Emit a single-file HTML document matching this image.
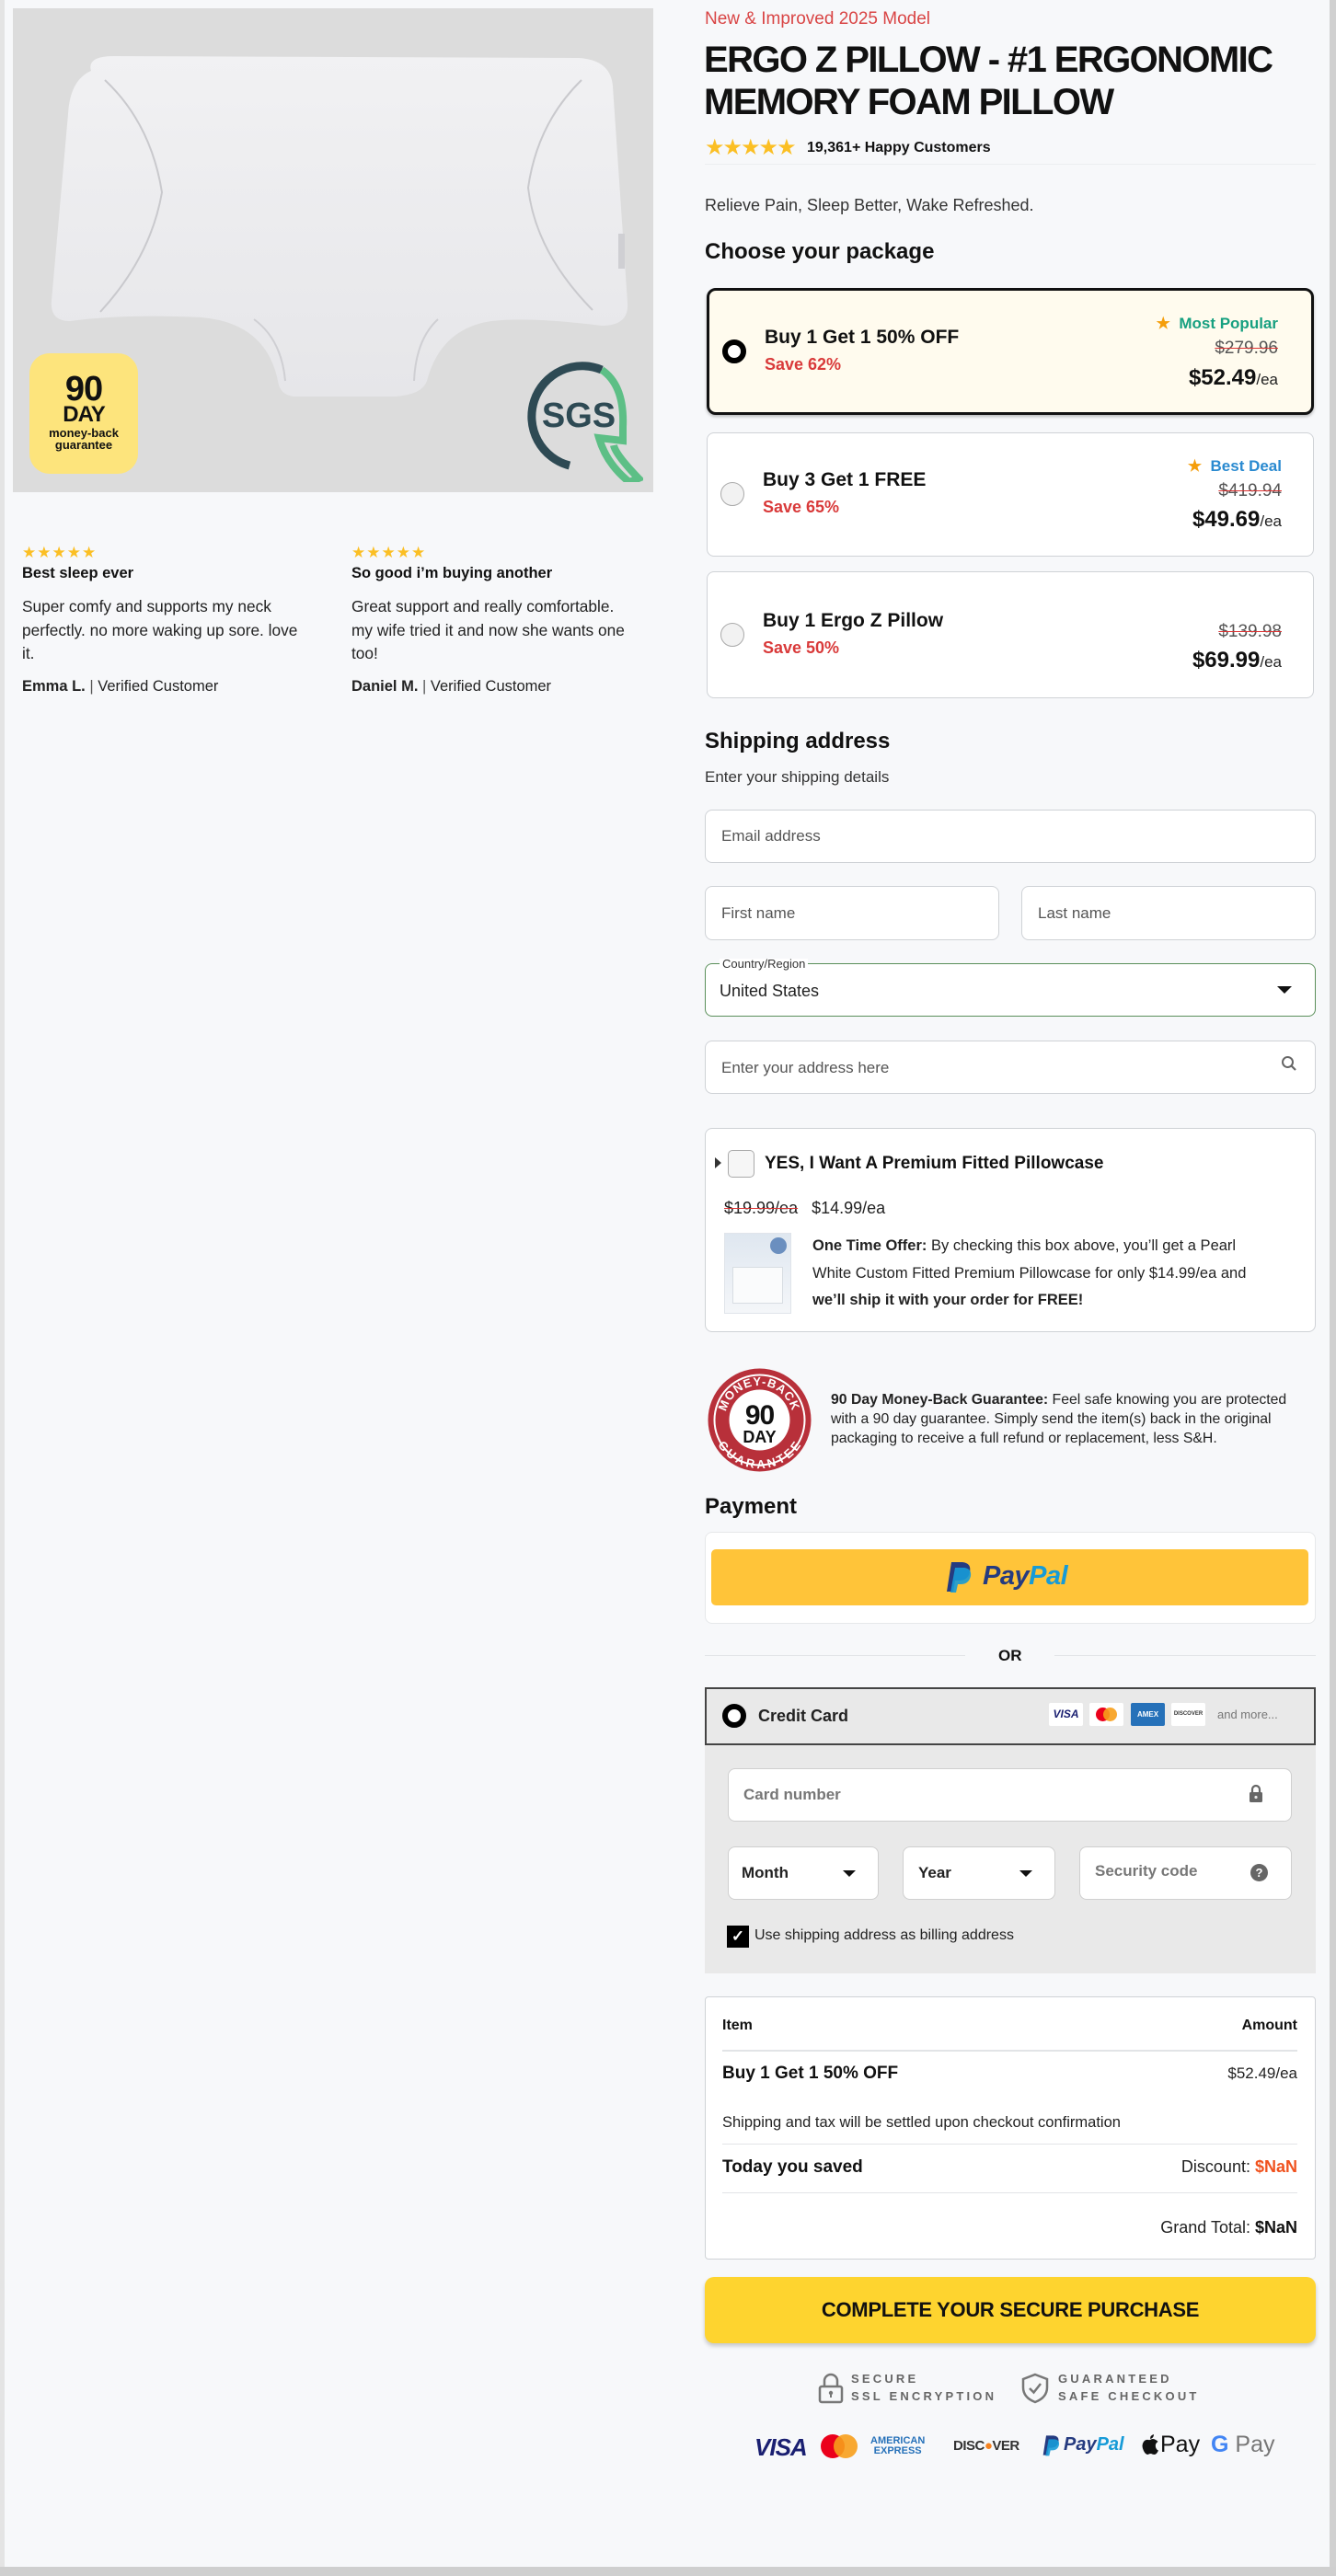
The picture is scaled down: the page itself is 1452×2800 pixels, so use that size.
<!DOCTYPE html>
<html><head><meta charset="utf-8"><style>
*{box-sizing:border-box;margin:0;padding:0}
body{width:1452px;height:2800px;background:#f7f8fa;font-family:"Liberation Sans",Arial,sans-serif;color:#111;position:relative;overflow:hidden}
.a{position:absolute;white-space:nowrap}
.b{font-weight:bold}
.box{position:absolute;background:#fff;border:1.5px solid #cfd2d6;border-radius:8px}
.ph{color:#555;font-size:17px}
.red{color:#d93a3a}
.strike{text-decoration:line-through;text-decoration-color:#d33;color:#555}
.line{position:absolute;height:1px;background:#e2e4e7}
.radio{position:absolute;width:26px;height:26px;border-radius:50%;border:1.5px solid #aaa;background:#f2f2f2}
.radio.on{border:6px solid #000;background:#fff}
</style></head><body>
<div style="position:absolute;left:0;top:0;width:5px;height:2800px;background:#e4e4e4"></div>
<div style="position:absolute;left:1445px;top:0;width:7px;height:2800px;background:#d0d0d0"></div>
<div style="position:absolute;left:0;top:2790px;width:1452px;height:10px;background:#cfcfcf"></div>

<div style="position:absolute;left:14px;top:9px;width:696px;height:526px;background:#dcdcdc;overflow:hidden">
<svg width="696" height="526" viewBox="0 0 696 526">
<defs><linearGradient id="pg" x1="0" y1="0" x2="0" y2="1"><stop offset="0" stop-color="#f1f1f3"/><stop offset="1" stop-color="#e6e6e9"/></linearGradient></defs>
<path d="M85 68 Q80 52 110 52 L615 54 Q650 56 652 85 L668 320 Q670 345 640 345 Q560 335 520 340 Q465 348 450 405 Q445 420 415 422 L305 422 Q290 420 288 405 Q275 342 205 336 Q120 332 62 340 Q40 340 42 318 L60 115 Q62 78 85 68 Z" fill="url(#pg)"/>
<path d="M100 78 Q150 125 162 200 Q150 270 95 330" fill="none" stroke="#c9c9cd" stroke-width="2"/>
<path d="M618 78 Q570 125 560 195 Q568 265 630 328" fill="none" stroke="#c9c9cd" stroke-width="2"/>
<path d="M262 338 Q292 360 296 405 M462 338 Q438 360 436 405" fill="none" stroke="#cfcfd3" stroke-width="2"/>
<rect x="658" y="245" width="7" height="38" fill="#cfcfd3"/>
</svg>
<div style="position:absolute;left:18px;top:375px;width:118px;height:131px;background:#fde47c;border-radius:22px;text-align:center;font-weight:bold;color:#111">
<div style="font-size:38px;line-height:34px;margin-top:22px;letter-spacing:-1px">90</div>
<div style="font-size:24px;line-height:22px;letter-spacing:-1px">DAY</div>
<div style="font-size:13px;line-height:13px;margin-top:2px">money-back<br>guarantee</div></div>
<svg style="position:absolute;left:545px;top:375px" width="140" height="140" viewBox="0 0 140 140">
<path d="M95 18 A55 55 0 1 0 60 122" fill="none" stroke="#2e4a54" stroke-width="9"/>
<path d="M95 18 Q120 35 118 80 L118 95 L92 92 Q100 120 125 140 L135 136 Q110 110 108 100" fill="none" stroke="#5dbf86" stroke-width="8"/>
<text x="70" y="80" text-anchor="middle" font-family="Liberation Sans,Arial,sans-serif" font-weight="bold" font-size="38" fill="#2e4a54">SGS</text>
</svg>
</div>

<div class="a" style="left:24px;top:591px;color:#fbbf24;font-size:17px;letter-spacing:1px">★★★★★</div>
<div class="a b" style="left:24px;top:614px;font-size:16.5px">Best sleep ever</div>
<div class="a" style="left:24px;top:647px;font-size:17.3px;line-height:25.5px;color:#222">Super comfy and supports my neck<br>perfectly. no more waking up sore. love<br>it.</div>
<div class="a" style="left:24px;top:737px;font-size:16.5px;color:#222"><b>Emma L.</b> <span style="color:#555">|</span> Verified Customer</div>
<div class="a" style="left:382px;top:591px;color:#fbbf24;font-size:17px;letter-spacing:1px">★★★★★</div>
<div class="a b" style="left:382px;top:614px;font-size:16.5px">So good i’m buying another</div>
<div class="a" style="left:382px;top:647px;font-size:17.3px;line-height:25.5px;color:#222">Great support and really comfortable.<br>my wife tried it and now she wants one<br>too!</div>
<div class="a" style="left:382px;top:737px;font-size:16.5px;color:#222"><b>Daniel M.</b> <span style="color:#555">|</span> Verified Customer</div>

<div class="a" style="left:766px;top:10px;font-size:19px;color:#d94545">New &amp; Improved 2025 Model</div>
<div class="a b" style="left:765px;top:42px;font-size:40px;line-height:46px;letter-spacing:-1.6px">ERGO Z PILLOW - #1 ERGONOMIC<br>MEMORY FOAM PILLOW</div>
<div class="a" style="left:766px;top:146px;font-size:24px;color:#fbbf24;letter-spacing:-2px">★★★★★</div>
<div class="a b" style="left:877px;top:152px;font-size:16px">19,361+ Happy Customers</div>
<div class="line" style="left:766px;top:178px;width:664px;background:#eceef0"></div>
<div class="a" style="left:766px;top:213px;font-size:18px;color:#333">Relieve Pain, Sleep Better, Wake Refreshed.</div>
<div class="a b" style="left:766px;top:260px;font-size:24px">Choose your package</div>

<div style="position:absolute;left:768px;top:313px;width:660px;height:138px;background:#fffbee;border:3px solid #111;border-radius:10px;box-shadow:0 2px 3px rgba(0,0,0,.25)"></div>
<div class="radio on" style="left:785px;top:369px"></div>
<div class="a b" style="left:831px;top:355px;font-size:21px">Buy 1 Get 1 50% OFF</div>
<div class="a b red" style="left:831px;top:386px;font-size:18px">Save 62%</div>
<div class="a b" style="right:63px;top:342px;font-size:17px;color:#17a080"><span style="color:#f59e0b">★</span>&nbsp; Most Popular</div>
<div class="a strike" style="right:63px;top:368px;font-size:19px">$279.96</div>
<div class="a" style="right:63px;top:397px;font-size:17px;color:#222"><b style="font-size:24px;color:#111">$52.49</b>/ea</div>
<div class="box" style="left:768px;top:470px;width:660px;height:135px"></div>
<div class="radio" style="left:783px;top:524px"></div>
<div class="a b" style="left:829px;top:510px;font-size:21px">Buy 3 Get 1 FREE</div>
<div class="a b red" style="left:829px;top:541px;font-size:18px">Save 65%</div>
<div class="a b" style="right:59px;top:497px;font-size:17px;color:#2a8ad0"><span style="color:#f59e0b">★</span>&nbsp; Best Deal</div>
<div class="a strike" style="right:59px;top:523px;font-size:19px">$419.94</div>
<div class="a" style="right:59px;top:551px;font-size:17px;color:#222"><b style="font-size:24px;color:#111">$49.69</b>/ea</div>
<div class="box" style="left:768px;top:621px;width:660px;height:138px"></div>
<div class="radio" style="left:783px;top:677px"></div>
<div class="a b" style="left:829px;top:663px;font-size:21px">Buy 1 Ergo Z Pillow</div>
<div class="a b red" style="left:829px;top:694px;font-size:18px">Save 50%</div>
<div class="a strike" style="right:59px;top:676px;font-size:19px">$139.98</div>
<div class="a" style="right:59px;top:704px;font-size:17px;color:#222"><b style="font-size:24px;color:#111">$69.99</b>/ea</div>

<div class="a b" style="left:766px;top:792px;font-size:24px">Shipping address</div>
<div class="a" style="left:766px;top:835px;font-size:17px;color:#333">Enter your shipping details</div>
<div class="box" style="left:766px;top:880px;width:664px;height:58px"></div>
<div class="a ph" style="left:784px;top:899px">Email address</div>
<div class="box" style="left:766px;top:963px;width:320px;height:59px"></div>
<div class="a ph" style="left:784px;top:983px">First name</div>
<div class="box" style="left:1110px;top:963px;width:320px;height:59px"></div>
<div class="a ph" style="left:1128px;top:983px">Last name</div>
<div class="box" style="left:766px;top:1047px;width:664px;height:58px;border-color:#5a8f5a"></div>
<div class="a" style="left:782px;top:1042px;font-size:13px;color:#333;background:#fff;padding:0 3px;line-height:12px">Country/Region</div>
<div class="a" style="left:782px;top:1067px;font-size:18px;color:#222">United States</div>
<div class="a" style="left:1388px;top:1072px;width:0;height:0;border-left:8px solid transparent;border-right:8px solid transparent;border-top:8px solid #111"></div>
<div class="box" style="left:766px;top:1131px;width:664px;height:58px"></div>
<div class="a ph" style="left:784px;top:1151px">Enter your address here</div>
<svg class="a" style="left:1392px;top:1147px" width="18" height="18" viewBox="0 0 18 18"><circle cx="7.5" cy="7.5" r="5.5" fill="none" stroke="#666" stroke-width="2"/><path d="M11.5 11.5 L16 16" stroke="#666" stroke-width="2.2"/></svg>

<div class="box" style="left:766px;top:1226px;width:664px;height:222px"></div>
<div class="a" style="left:777px;top:1258px;width:0;height:0;border-top:6px solid transparent;border-bottom:6px solid transparent;border-left:7px solid #333"></div>
<div class="a" style="left:791px;top:1250px;width:29px;height:30px;border:1.5px solid #aaa;border-radius:5px;background:#f6f6f6"></div>
<div class="a b" style="left:831px;top:1254px;font-size:19px">YES, I Want A Premium Fitted Pillowcase</div>
<div class="a" style="left:787px;top:1303px;font-size:18px;color:#222"><span style="text-decoration:line-through;text-decoration-color:#d33">$19.99/ea</span>&nbsp;&nbsp;&nbsp;$14.99/ea</div>
<div class="a" style="left:787px;top:1340px;width:73px;height:88px;background:linear-gradient(#dfe7f0,#f4f6f9);border:1px solid #e0e4ea"><div style="position:absolute;right:4px;top:4px;width:18px;height:18px;border-radius:50%;background:#6b8fbf"></div><div style="position:absolute;left:8px;top:36px;width:55px;height:40px;background:#fafbfc;border:1px solid #d8dde3"></div></div>
<div class="a" style="left:883px;top:1340px;font-size:16.5px;line-height:29.5px;color:#222"><b>One Time Offer:</b> By checking this box above, you’ll get a Pearl<br>White Custom Fitted Premium Pillowcase for only $14.99/ea and<br><b>we’ll ship it with your order for FREE!</b></div>

<svg class="a" style="left:768px;top:1486px" width="115" height="115" viewBox="0 0 115 115">
<defs><path id="arc1" d="M20 57 A37 37 0 0 1 94 57"/><path id="arc2" d="M14 57 A43 43 0 0 0 101 57"/></defs>
<circle cx="57.5" cy="57.5" r="56" fill="#b8303a"/><circle cx="57.5" cy="57.5" r="49" fill="none" stroke="#fff" stroke-width="2"/>
<circle cx="57.5" cy="57.5" r="33" fill="#fff"/>
<text font-family="Liberation Sans,Arial" font-weight="bold" font-size="13" fill="#fff" letter-spacing="1"><textPath href="#arc1" startOffset="50%" text-anchor="middle">MONEY-BACK</textPath></text>
<text font-family="Liberation Sans,Arial" font-weight="bold" font-size="13" fill="#fff" letter-spacing="1"><textPath href="#arc2" startOffset="50%" text-anchor="middle" dominant-baseline="hanging">GUARANTEE</textPath></text>
<text x="57.5" y="62" text-anchor="middle" font-family="Liberation Sans,Arial" font-weight="bold" font-size="30" fill="#111" letter-spacing="-1">90</text>
<text x="57.5" y="82" text-anchor="middle" font-family="Liberation Sans,Arial" font-weight="bold" font-size="18" fill="#111">DAY</text>
</svg>
<div class="a" style="left:903px;top:1511px;font-size:15.8px;line-height:21px;color:#222"><b>90 Day Money-Back Guarantee:</b> Feel safe knowing you are protected<br>with a 90 day guarantee. Simply send the item(s) back in the original<br>packaging to receive a full refund or replacement, less S&amp;H.</div>

<div class="a b" style="left:766px;top:1624px;font-size:24px">Payment</div>
<div class="box" style="left:766px;top:1665px;width:664px;height:100px;border-color:#e6e8ea"></div>
<div class="a" style="left:773px;top:1684px;width:649px;height:61px;background:#ffc439;border-radius:5px"></div>
<svg class="a" style="left:1028px;top:1696px" width="30" height="36" viewBox="0 0 30 36"><path d="M6 2 H18 Q28 3 26 13 Q24 22 14 22 H10 L8 34 H1 Z" fill="#253b80"/><path d="M10 8 H20 Q28 9 27 17 Q25 26 16 26 H13 L11 35 H5 Z" fill="#179bd7" opacity=".9"/></svg>
<div class="a b" style="left:1068px;top:1697px;font-size:29px;font-style:italic;letter-spacing:-0.5px"><span style="color:#253b80">Pay</span><span style="color:#179bd7">Pal</span></div>
<div class="line" style="left:766px;top:1799px;width:283px"></div>
<div class="line" style="left:1146px;top:1799px;width:284px"></div>
<div class="a b" style="left:1085px;top:1790px;font-size:17px">OR</div>

<div class="a" style="left:766px;top:1834px;width:664px;height:63px;background:#e9e9e9;border:2px solid #444"></div>
<div class="radio on" style="left:785px;top:1852px"></div>
<div class="a b" style="left:824px;top:1855px;font-size:18px;color:#222">Credit Card</div>
<div class="a b" style="left:1140px;top:1851px;width:37px;height:25px;background:#fff;border-radius:2px;font-size:12px;color:#1a1f71;font-style:italic;text-align:center;line-height:25px">VISA</div>
<div class="a" style="left:1184px;top:1851px;width:37px;height:25px;background:#fff;border-radius:2px"><div style="position:absolute;left:7px;top:5px;width:15px;height:15px;border-radius:50%;background:#eb001b"></div><div style="position:absolute;left:15px;top:5px;width:15px;height:15px;border-radius:50%;background:#f79e1b;opacity:.9"></div></div>
<div class="a" style="left:1229px;top:1851px;width:37px;height:25px;background:#2671b9;border-radius:2px;font-size:8px;color:#fff;text-align:center;line-height:25px;font-weight:bold">AMEX</div>
<div class="a" style="left:1273px;top:1851px;width:37px;height:25px;background:#fff;border-radius:2px;font-size:6px;color:#333;text-align:center;line-height:25px;font-weight:bold">DISCOVER</div>
<div class="a" style="left:1323px;top:1856px;font-size:13px;color:#777">and more...</div>

<div class="a" style="left:766px;top:1897px;width:664px;height:248px;background:#e9e9e9"></div>
<div class="box" style="left:791px;top:1922px;width:613px;height:58px;border-color:#cfcfcf"></div>
<div class="a b" style="left:808px;top:1941px;font-size:17px;color:#777">Card number</div>
<svg class="a" style="left:1357px;top:1939px" width="16" height="20" viewBox="0 0 16 20"><path d="M4 9 V6 a4 4 0 0 1 8 0 V9" fill="none" stroke="#666" stroke-width="2.2"/><rect x="1" y="9" width="14" height="11" rx="1.5" fill="#666"/><circle cx="8" cy="14.5" r="1.6" fill="#e9e9e9"/></svg>
<div class="box" style="left:791px;top:2007px;width:164px;height:58px;border-color:#cfcfcf"></div>
<div class="a b" style="left:806px;top:2026px;font-size:17px;color:#222">Month</div>
<div class="a" style="left:916px;top:2033px;border-left:7px solid transparent;border-right:7px solid transparent;border-top:7px solid #111"></div>
<div class="box" style="left:981px;top:2007px;width:166px;height:58px;border-color:#cfcfcf"></div>
<div class="a b" style="left:998px;top:2026px;font-size:17px;color:#222">Year</div>
<div class="a" style="left:1108px;top:2033px;border-left:7px solid transparent;border-right:7px solid transparent;border-top:7px solid #111"></div>
<div class="box" style="left:1173px;top:2007px;width:231px;height:58px;border-color:#cfcfcf"></div>
<div class="a b" style="left:1190px;top:2024px;font-size:17px;color:#777">Security code</div>
<div class="a b" style="left:1359px;top:2026px;width:19px;height:19px;border-radius:50%;background:#666;color:#fff;font-size:13px;text-align:center;line-height:19px">?</div>
<div class="a" style="left:790px;top:2093px;width:24px;height:24px;background:#000;color:#fff;font-size:17px;text-align:center;line-height:24px;font-weight:bold">✓</div>
<div class="a" style="left:820px;top:2095px;font-size:16px;color:#222">Use shipping address as billing address</div>

<div class="box" style="left:766px;top:2170px;width:664px;height:286px;border-radius:4px"></div>
<div class="a b" style="left:785px;top:2193px;font-size:16px">Item</div>
<div class="a b" style="right:42px;top:2193px;font-size:16px">Amount</div>
<div class="line" style="left:785px;top:2228px;width:625px;height:2px"></div>
<div class="a b" style="left:785px;top:2243px;font-size:19px">Buy 1 Get 1 50% OFF</div>
<div class="a" style="right:42px;top:2244px;font-size:17px;color:#222">$52.49/ea</div>
<div class="a" style="left:785px;top:2298px;font-size:16.5px;color:#222">Shipping and tax will be settled upon checkout confirmation</div>
<div class="line" style="left:785px;top:2330px;width:625px"></div>
<div class="a b" style="left:785px;top:2345px;font-size:19px">Today you saved</div>
<div class="a" style="right:42px;top:2345px;font-size:18px;color:#222">Discount: <b style="color:#f0521e">$NaN</b></div>
<div class="line" style="left:785px;top:2383px;width:625px"></div>
<div class="a" style="right:42px;top:2411px;font-size:18px;color:#222">Grand Total: <b style="color:#111">$NaN</b></div>

<div class="a b" style="left:766px;top:2475px;width:664px;height:72px;background:#fed42f;border-radius:10px;box-shadow:0 3px 5px rgba(0,0,0,.2);text-align:center;line-height:72px;font-size:22px;letter-spacing:-0.3px">COMPLETE YOUR SECURE PURCHASE</div>

<svg class="a" style="left:889px;top:2579px" width="28" height="34" viewBox="0 0 28 34"><path d="M7 15 V9 a7 7 0 0 1 14 0 V15" fill="none" stroke="#777" stroke-width="2.5"/><rect x="2" y="15" width="24" height="17" rx="2" fill="none" stroke="#777" stroke-width="2.5"/><circle cx="14" cy="22" r="2.2" fill="#777"/><path d="M14 23 V27" stroke="#777" stroke-width="2"/></svg>
<div class="a b" style="left:925px;top:2576px;font-size:13px;line-height:19px;letter-spacing:3.2px;color:#666">SECURE<br>SSL ENCRYPTION</div>
<svg class="a" style="left:1109px;top:2579px" width="32" height="34" viewBox="0 0 32 34"><path d="M16 2 L29 7 V16 Q29 27 16 32 Q3 27 3 16 V7 Z" fill="none" stroke="#777" stroke-width="2.5"/><path d="M10 17 L14.5 21.5 L22 12" fill="none" stroke="#777" stroke-width="2.5"/></svg>
<div class="a b" style="left:1150px;top:2576px;font-size:13px;line-height:19px;letter-spacing:3.2px;color:#666">GUARANTEED<br>SAFE CHECKOUT</div>

<div class="a b" style="left:820px;top:2645px;font-size:26px;font-style:italic;color:#1a1f71;letter-spacing:-1px">VISA</div>
<div class="a" style="left:892px;top:2646px;width:26px;height:26px;border-radius:50%;background:#eb001b"></div>
<div class="a" style="left:906px;top:2646px;width:26px;height:26px;border-radius:50%;background:#f79e1b;opacity:.9"></div>
<div class="a b" style="left:946px;top:2648px;font-size:11px;line-height:11px;color:#2671b9;text-align:center">AMERICAN<br>EXPRESS</div>
<div class="a b" style="left:1036px;top:2650px;font-size:15px;color:#333;letter-spacing:-0.5px">DISC<span style="color:#f58220">●</span>VER</div>
<svg class="a" style="left:1133px;top:2645px" width="20" height="26" viewBox="0 0 30 36"><path d="M6 2 H18 Q28 3 26 13 Q24 22 14 22 H10 L8 34 H1 Z" fill="#253b80"/><path d="M10 8 H20 Q28 9 27 17 Q25 26 16 26 H13 L11 35 H5 Z" fill="#179bd7" opacity=".9"/></svg>
<div class="a b" style="left:1156px;top:2646px;font-size:20px;font-style:italic"><span style="color:#253b80">Pay</span><span style="color:#179bd7">Pal</span></div>
<svg class="a" style="left:1240px;top:2645px" width="20" height="24" viewBox="0 0 20 24"><path d="M10 7 Q13 5 16 7 Q18 8 18.5 9 Q15 11 16 15 Q17 18 19 18.5 Q17 23 14.5 23 Q13 23 11 22 Q9 22 7.5 23 Q5 23 3 19 Q0 13 3 9 Q5 6.5 8 7 Q9 7.3 10 7 Z" fill="#111"/><path d="M10 6 Q10 2 14 1 Q14 5 10 6 Z" fill="#111"/></svg>
<div class="a" style="left:1261px;top:2643px;font-size:25px;color:#111">Pay</div>
<div class="a" style="left:1316px;top:2643px;font-size:25px;color:#777"><b style="color:#4285f4">G</b> Pay</div>
</body></html>
